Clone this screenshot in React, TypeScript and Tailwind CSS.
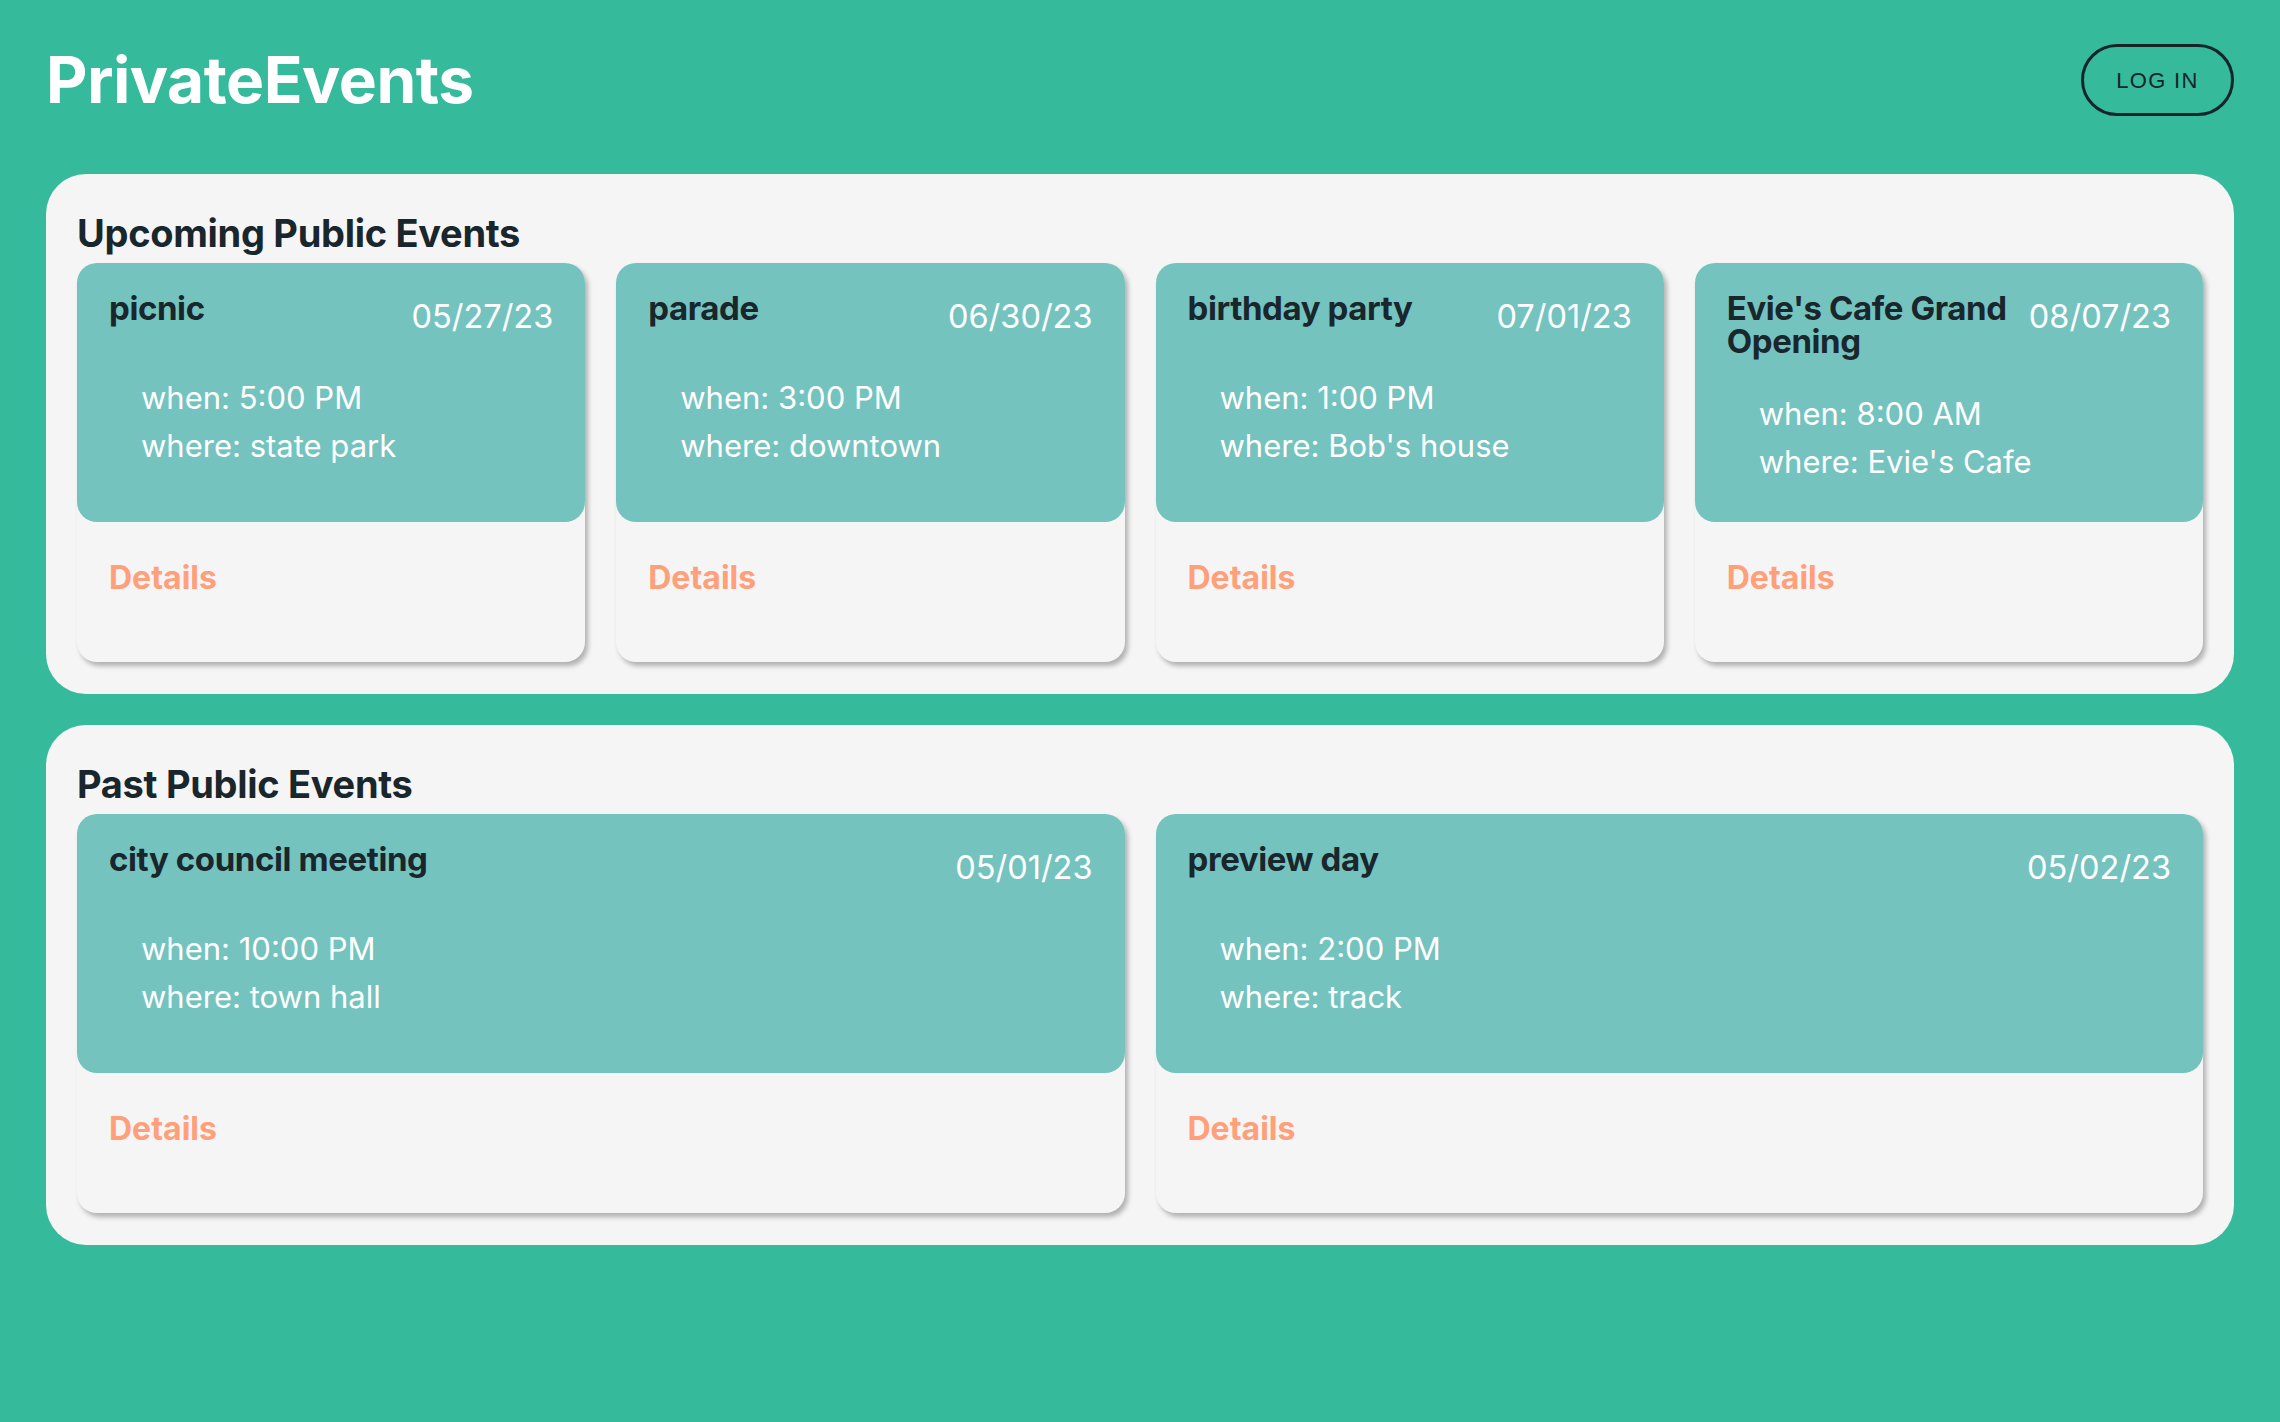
import React from "react";

type Ev = { title: string; date: string; when: string; where: string };

const upcoming: Ev[] = [
  { title: "picnic", date: "05/27/23", when: "5:00 PM", where: "state park" },
  { title: "parade", date: "06/30/23", when: "3:00 PM", where: "downtown" },
  { title: "birthday party", date: "07/01/23", when: "1:00 PM", where: "Bob's house" },
  { title: "Evie's Cafe Grand Opening", date: "08/07/23", when: "8:00 AM", where: "Evie's Cafe" },
];

const past: Ev[] = [
  { title: "city council meeting", date: "05/01/23", when: "10:00 PM", where: "town hall" },
  { title: "preview day", date: "05/02/23", when: "2:00 PM", where: "track" },
];

function Card({ ev }: { ev: Ev }) {
  return (
    <div className="rounded-[20px] bg-[#f5f5f5] shadow-[3px_4px_5px_rgba(0,0,0,0.28)] h-[399px] flex flex-col">
      <div className="rounded-[20px] bg-[#74c3bf] h-[259px] px-[32px] pt-[29px]">
        <div className="flex items-start justify-between gap-[20px]">
          <div className="text-[33px] leading-[33px] font-bold text-[#19262c] tracking-[-0.4px]">{ev.title}</div>
          <div className="text-[32.5px] leading-[50px] text-white whitespace-nowrap">{ev.date}</div>
        </div>
        <div className="ml-[32px] mt-[32px] text-white text-[31px] leading-[48px]">
          <div>when: {ev.when}</div>
          <div>where: {ev.where}</div>
        </div>
      </div>
      <div className="px-[32px] pt-[38px]">
        <a className="text-[32px] leading-[36px] font-bold text-[#ffa07a]">Details</a>
      </div>
    </div>
  );
}

function Panel({ title, events, cols }: { title: string; events: Ev[]; cols: string }) {
  return (
    <section className="rounded-[40px] bg-[#f5f5f5] px-[31px] pt-[37px] pb-[32px]">
      <h2 className="text-[38px] leading-[44px] font-bold text-[#19262c] mb-[8px] tracking-[-0.3px]">{title}</h2>
      <div className={cols}>
        {events.map((e) => (
          <Card key={e.title} ev={e} />
        ))}
      </div>
    </section>
  );
}

export default function App() {
  return (
    <div
      className="min-h-[1422px] bg-[#35ba9b] px-[46px] pb-[40px]"
      style={{ fontFamily: "Inter, 'Noto Sans', sans-serif" }}
    >
      <header className="h-[160px] flex items-center justify-between">
        <h1 className="text-[64px] leading-none font-bold text-white tracking-[-0.5px]">PrivateEvents</h1>
        <button
          className="h-[72px] w-[153px] rounded-full border-[3px] border-[#16252a] text-[#16252a] text-[22px] tracking-[1.3px]"
          style={{ fontFamily: "'Liberation Sans', Arial, sans-serif" }}
        >
          LOG IN
        </button>
      </header>
      <main className="mt-[14px] flex flex-col gap-[31px]">
        <Panel title="Upcoming Public Events" events={upcoming} cols="grid grid-cols-4 gap-[31px]" />
        <Panel title="Past Public Events" events={past} cols="grid grid-cols-2 gap-[31px]" />
      </main>
    </div>
  );
}
